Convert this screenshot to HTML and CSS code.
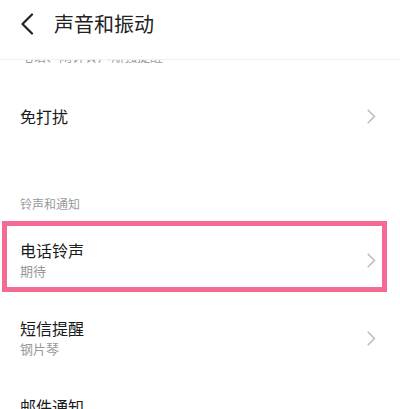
FILE: index.html
```html
<!DOCTYPE html>
<html lang="zh-CN">
<head>
<meta charset="utf-8">
<title>声音和振动</title>
<link rel="stylesheet" href="styles.css">
</head>
<body>
<header class="topbar">
  <svg class="back" width="14" height="22" viewBox="0 0 14 22"><path d="M12 1.5 L2.5 11 L12 20.5" fill="none" stroke="#222" stroke-width="2.2" stroke-linecap="round" stroke-linejoin="round"/></svg>
  <h1 class="title">声音和振动</h1>
</header>
<main class="list">
  <div class="row row-first">
    <div class="texts">
      <div class="name">渐强铃声</div>
      <div class="sub">电话、闹钟铃声渐强提醒</div>
    </div>
  </div>
  <div class="row row-one">
    <div class="texts"><div class="name">免打扰</div></div>
    <svg class="chev" width="9" height="15" viewBox="0 0 9 15"><path d="M1.2 1.2 L7.5 7.5 L1.2 13.8" fill="none" stroke="#bdbdbd" stroke-width="1.6" stroke-linecap="round" stroke-linejoin="round"/></svg>
  </div>
  <div class="section">铃声和通知</div>
  <div class="row row-two highlight">
    <div class="texts">
      <div class="name">电话铃声</div>
      <div class="sub">期待</div>
    </div>
    <svg class="chev" width="9" height="15" viewBox="0 0 9 15"><path d="M1.2 1.2 L7.5 7.5 L1.2 13.8" fill="none" stroke="#bdbdbd" stroke-width="1.6" stroke-linecap="round" stroke-linejoin="round"/></svg>
  </div>
  <div class="row row-two">
    <div class="texts">
      <div class="name">短信提醒</div>
      <div class="sub">钢片琴</div>
    </div>
    <svg class="chev" width="9" height="15" viewBox="0 0 9 15"><path d="M1.2 1.2 L7.5 7.5 L1.2 13.8" fill="none" stroke="#bdbdbd" stroke-width="1.6" stroke-linecap="round" stroke-linejoin="round"/></svg>
  </div>
  <div class="row row-two">
    <div class="texts">
      <div class="name">邮件通知</div>
      <div class="sub">默认</div>
    </div>
    <svg class="chev" width="9" height="15" viewBox="0 0 9 15"><path d="M1.2 1.2 L7.5 7.5 L1.2 13.8" fill="none" stroke="#bdbdbd" stroke-width="1.6" stroke-linecap="round" stroke-linejoin="round"/></svg>
  </div>
</main>
</body>
</html>
```
FILE: styles.css
```css
html, body {
  margin: 0;
  padding: 0;
  background: #fff;
  width: 400px;
  height: 409px;
  overflow: hidden;
  font-family: "Noto Sans CJK SC", "Noto Sans", sans-serif;
}
.topbar {
  position: fixed;
  top: 0;
  left: 0;
  right: 0;
  height: 59px;
  background: #fff;
  border-bottom: 1px solid #f0f0f0;
  display: flex;
  align-items: center;
  padding: 0 0 0 20px;
  z-index: 2;
  box-sizing: content-box;
}
.back {
  display: block;
  margin-top: -12px;
}
.title {
  margin: -12px 0 0 20px;
  font-size: 20px;
  font-weight: 400;
  color: #222;
  line-height: 24px;
}
.list {
  display: flex;
  flex-direction: column;
}
.row {
  position: relative;
  display: flex;
  align-items: center;
  justify-content: space-between;
  padding: 0 24px 0 20px;
  box-sizing: border-box;
}
.row-first { height: 84px; padding-top: 6px; }
.row-one { height: 64px; }
.row-two { height: 78px; }
.texts {
  display: flex;
  flex-direction: column;
}
.name {
  font-size: 16px;
  line-height: 20px;
  color: #1a1a1a;
}
.sub {
  font-size: 13px;
  line-height: 18px;
  margin-top: 2px;
  color: #999;
}
.chev { display: block; }
.section {
  height: 73px;
  box-sizing: border-box;
  padding: 0 20px 8px;
  display: flex;
  align-items: flex-end;
  font-size: 12px;
  line-height: 18px;
  color: #999;
}
.highlight::after {
  content: "";
  position: absolute;
  left: 2px;
  right: 13px;
  top: 0;
  bottom: 7px;
  border: 5px solid #f36b93;
  pointer-events: none;
}
```
